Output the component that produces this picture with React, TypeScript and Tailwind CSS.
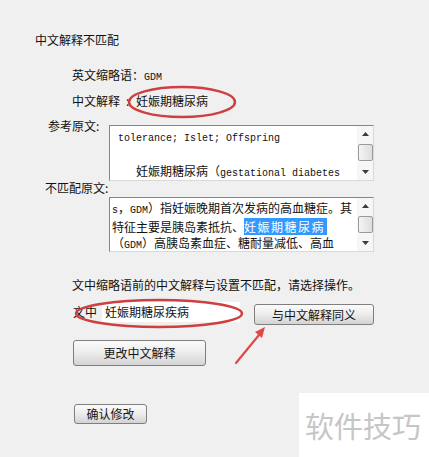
import React from "react";

const Mono = ({ children }: { children: React.ReactNode }) => (
  <span className="font-['Liberation_Mono',monospace] text-[10px]">{children}</span>
);

const ScrollBar = () => (
  <div className="flex h-full w-[16px] flex-col items-center bg-[#f6f6f6]">
    <div className="flex h-[16px] w-full items-center justify-center">
      <svg width="7" height="4" viewBox="0 0 7 4">
        <path d="M0 4 L3.5 0 L7 4 Z" fill="#3a3a3a" />
      </svg>
    </div>
    <div className="mt-[2px] h-[17px] w-[15px] rounded-[2px] border border-[#9a9a9a] bg-linear-to-r from-[#f4f4f4] to-[#dedede]" />
    <div className="flex-1" />
    <div className="flex h-[16px] w-full items-center justify-center">
      <svg width="7" height="4" viewBox="0 0 7 4">
        <path d="M0 0 L3.5 4 L7 0 Z" fill="#3a3a3a" />
      </svg>
    </div>
  </div>
);

const TextBox = ({ children, h }: { children: React.ReactNode; h: string }) => (
  <div
    className={`flex w-[265px] ${h} overflow-hidden border border-t-[#828790] border-l-[#828790] border-r-[#d9d9d9] border-b-[#d9d9d9] bg-white`}
  >
    <div className="flex-1 overflow-hidden pl-[2px] pt-[2px] text-[12px] leading-4 text-[#111]">
      {children}
    </div>
    <ScrollBar />
  </div>
);

const Button = ({ label, w, h }: { label: string; w: string; h: string }) => (
  <div
    className={`flex ${w} ${h} items-center justify-center rounded-[3px] border border-[#7f7f7f] bg-linear-to-b from-[#fbfbfb] via-[#ececec] to-[#d3d3d3] text-[12px] text-[#151515]`}
  >
    {label}
  </div>
);

export default function App() {
  return (
    <div className="relative h-[457px] w-[429px] overflow-hidden bg-[#f0f0f0] font-['Noto_Sans_CJK_SC',sans-serif] text-[12px] leading-4 text-[#111]">
      <div className="ml-[35px] mt-[32px] h-4">中文解释不匹配</div>

      <div className="ml-[72px] mt-[19px] h-4">
        英文缩略语：<Mono>GDM</Mono>
      </div>

      <div className="ml-[72px] mt-[10px] flex h-4 whitespace-nowrap">
        <span>中文解释</span>
        <span className="ml-[6px] w-[10px]">:</span>
        <span>妊娠期糖尿病</span>
      </div>

      <div className="mt-[9px] flex items-start">
        <div className="ml-[48px] w-[61px]">参考原文:</div>
        <div className="mt-[7px]">
          <TextBox h="h-[56px]">
            <div className="whitespace-nowrap pl-[6px]">
              <Mono>tolerance; Islet; Offspring</Mono>
            </div>
            <div className="h-4" />
            <div className="whitespace-nowrap pl-[24px]">
              妊娠期糖尿病（<Mono>gestational diabetes</Mono>
            </div>
            <div className="whitespace-nowrap pl-[76px]">
              <Mono>mellitus</Mono>，<Mono>GDM</Mono>）指妊娠晚期
            </div>
          </TextBox>
        </div>
      </div>

      <div className="ml-[45px] mt-[-1px] h-4">不匹配原文:</div>

      <div className="ml-[109px] mt-[1px]">
        <TextBox h="h-[55px]">
          <div className="whitespace-nowrap">
            <Mono>s</Mono>，<Mono>GDM</Mono>）指妊娠晚期首次发病的高血糖症。其
          </div>
          <div className="whitespace-nowrap">
            特征主要是胰岛素抵抗、
            <span className="bg-[#3399ff] pr-[2px] tracking-[1.5px] text-white">妊娠期糖尿病</span>
          </div>
          <div className="whitespace-nowrap">
            （<Mono>GDM</Mono>）高胰岛素血症、糖耐量减低、高血
          </div>
          <div className="whitespace-nowrap">压、血脂异常，巨大儿发生率增高</div>
        </TextBox>
      </div>

      <div className="ml-[72px] mt-[25px] h-4 whitespace-nowrap">
        文中缩略语前的中文解释与设置不匹配，请选择操作。
      </div>

      <div className="mt-[9px] flex items-start">
        <div className="ml-[73px] mt-[2px] w-[29px] leading-4">文中</div>
        <div className="flex h-[20px] w-[138px] items-center bg-white pl-[3px] text-[12px]">
          妊娠期糖尿疾病
        </div>
        <div className="ml-[14px] mt-[2px]">
          <Button label="与中文解释同义" w="w-[120px]" h="h-[21px]" />
        </div>
      </div>

      <div className="ml-[73px] mt-[15px]">
        <Button label="更改中文解释" w="w-[133px]" h="h-[26px]" />
      </div>

      <div className="ml-[74px] mt-[38px]">
        <Button label="确认修改" w="w-[73px]" h="h-[20px]" />
      </div>

      {/* annotations */}
      <svg className="pointer-events-none absolute left-0 top-0" width="429" height="457">
        <ellipse cx="182" cy="102" rx="53" ry="15" fill="none" stroke="#cf3f3f" strokeWidth="2.5" />
        <ellipse cx="159" cy="313.5" rx="83" ry="13.5" fill="none" stroke="#cf3f3f" strokeWidth="2.5" />
        <line x1="236" y1="363" x2="259" y2="335" stroke="#e04848" strokeWidth="2.2" strokeLinecap="round" />
        <polygon points="265,327 262,338 255,332" fill="#e04848" />
      </svg>

      <div className="absolute bottom-0 right-0 flex h-[64px] w-[130px] items-center bg-white pl-[6px]">
        <span className="text-[29px] leading-none text-[#c6c6c6]">软件技巧</span>
      </div>
    </div>
  );
}
